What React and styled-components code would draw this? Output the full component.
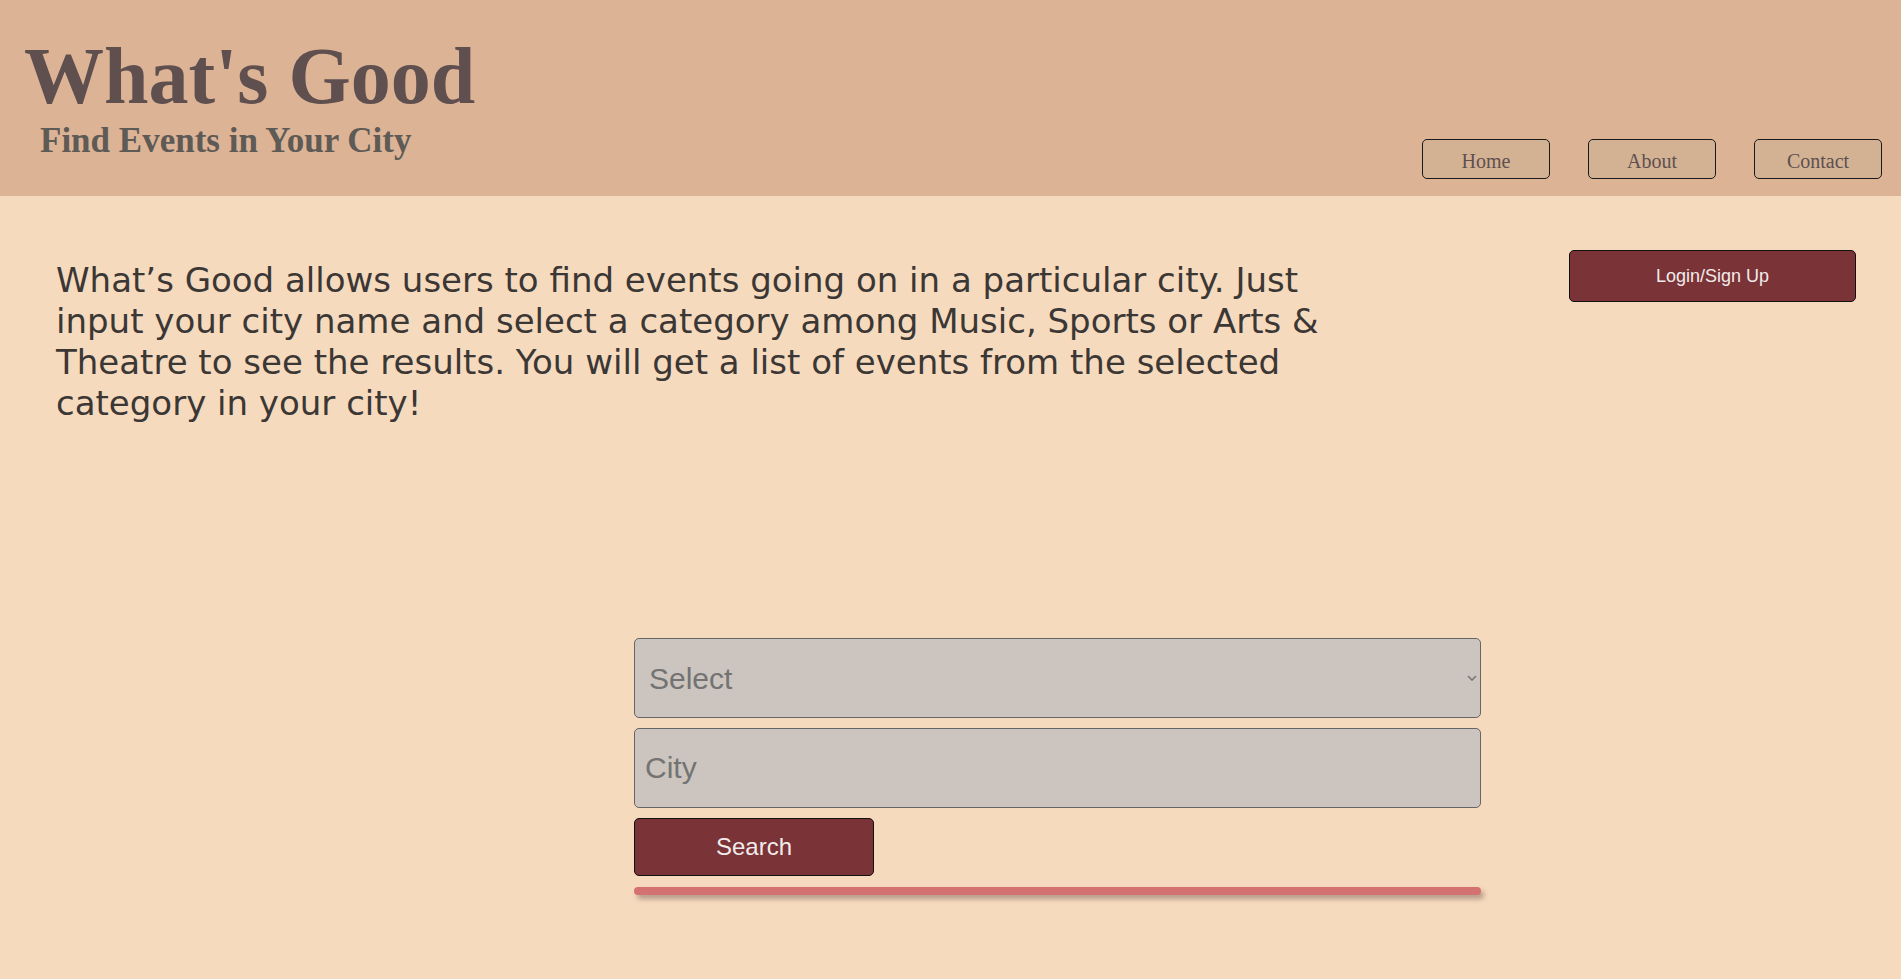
import React, { useState } from 'react';
import styled, { createGlobalStyle } from 'styled-components';

// ============================
// Global
// ============================

const GlobalStyle = createGlobalStyle`
  html, body {
    margin: 0;
    padding: 0;
    background: #f6dabe;
  }
  * {
    box-sizing: border-box;
  }
`;

// ============================
// Header
// ============================

const Header = styled.header`
  display: flex;
  justify-content: space-between;
  height: 196px;
  background: #ddb396;
`;

const Brand = styled.div`
  padding: 31px 0 0 24px;
`;

const Title = styled.h1`
  margin: 0;
  font-family: 'Liberation Serif', 'Times New Roman', serif;
  font-size: 80px;
  font-weight: 700;
  line-height: normal;
  color: #5f4f4f;
`;

const Tagline = styled.h2`
  margin: -1px 0 0 16px;
  font-family: 'Liberation Serif', 'Times New Roman', serif;
  font-size: 35px;
  font-weight: 700;
  line-height: normal;
  color: #5e5a55;
`;

const Nav = styled.nav`
  align-self: flex-end;
  display: flex;
  gap: 38px;
  padding: 0 19px 17px 0;
`;

const NavButton = styled.button`
  width: 128px;
  height: 40px;
  padding: 5px 0 0;
  background: #d3b294;
  border: 1px solid #1a1a1a;
  border-radius: 5px;
  font-family: 'Liberation Serif', 'Times New Roman', serif;
  font-size: 20px;
  color: #5f4f4f;
  cursor: pointer;
`;

// ============================
// Intro
// ============================

const Main = styled.main`
  padding-top: 54px;
  padding-bottom: 80px;
`;

const TopRow = styled.section`
  display: flex;
  align-items: flex-start;
  padding: 0 45px 0 56px;
`;

const Intro = styled.p`
  margin: 10px 0 0;
  width: 1300px;
  font-family: 'DejaVu Sans', Verdana, sans-serif;
  font-size: 34px;
  line-height: 41px;
  color: #3b3735;
`;

const RedButton = styled.button`
  width: ${(p) => p.$w}px;
  height: ${(p) => p.$h}px;
  padding: 0;
  background: #7a3337;
  border: 1px solid #111;
  border-radius: 5px;
  font-family: 'Liberation Sans', Arial, sans-serif;
  font-size: ${(p) => p.$size}px;
  color: #f2ebeb;
  cursor: pointer;
`;

const LoginButton = styled(RedButton)`
  margin-left: auto;
`;

// ============================
// Search form
// ============================

const SearchForm = styled.form`
  display: flex;
  flex-direction: column;
  width: 847px;
  margin: 214px 0 0 634px;
`;

const SelectWrap = styled.div`
  position: relative;
`;

const fieldBase = `
  width: 100%;
  height: 80px;
  margin: 0;
  background: #ccc4be;
  border: 1px solid #666;
  border-radius: 5px;
  font-family: 'Liberation Sans', Arial, sans-serif;
  font-size: 30px;
  color: #737373;
  outline: none;
`;

const Select = styled.select`
  ${fieldBase}
  appearance: none;
  padding: 0 30px 0 14px;
`;

const Chevron = styled.svg`
  position: absolute;
  right: 4px;
  top: 37px;
  pointer-events: none;
`;

const CityInput = styled.input`
  ${fieldBase}
  margin-top: 10px;
  padding: 0 10px;

  &::placeholder {
    color: #737373;
  }
`;

const SearchButton = styled(RedButton)`
  margin-top: 10px;
`;

const Underline = styled.div`
  height: 8px;
  margin-top: 11px;
  background: #d47171;
  border-radius: 4px;
  box-shadow: 3px 4px 5px rgba(60, 40, 40, 0.35);
`;

// ============================
// App
// ============================

export default function App() {
  const [category, setCategory] = useState('');
  const [city, setCity] = useState('');

  const handleSubmit = (e) => {
    e.preventDefault();
  };

  return (
    <>
      <GlobalStyle />
      <Header>
        <Brand>
          <Title>What's Good</Title>
          <Tagline>Find Events in Your City</Tagline>
        </Brand>
        <Nav>
          <NavButton>Home</NavButton>
          <NavButton>About</NavButton>
          <NavButton>Contact</NavButton>
        </Nav>
      </Header>

      <Main>
        <TopRow>
          <Intro>
            What’s Good allows users to find events going on in a particular city. Just
            input your city name and select a category among Music, Sports or Arts &amp;
            Theatre to see the results. You will get a list of events from the selected
            category in your city!
          </Intro>
          <LoginButton $w={287} $h={52} $size={18}>
            Login/Sign Up
          </LoginButton>
        </TopRow>

        <SearchForm onSubmit={handleSubmit}>
          <SelectWrap>
            <Select value={category} onChange={(e) => setCategory(e.target.value)}>
              <option value="">Select</option>
              <option value="music">Music</option>
              <option value="sports">Sports</option>
              <option value="arts">Arts &amp; Theatre</option>
            </Select>
            <Chevron width="10" height="6" viewBox="0 0 10 6">
              <path d="M1 1l4 4 4-4" fill="none" stroke="#777" strokeWidth="1.6" />
            </Chevron>
          </SelectWrap>
          <CityInput
            type="text"
            placeholder="City"
            value={city}
            onChange={(e) => setCity(e.target.value)}
          />
          <SearchButton type="submit" $w={240} $h={58} $size={24}>
            Search
          </SearchButton>
          <Underline />
        </SearchForm>
      </Main>
    </>
  );
}
